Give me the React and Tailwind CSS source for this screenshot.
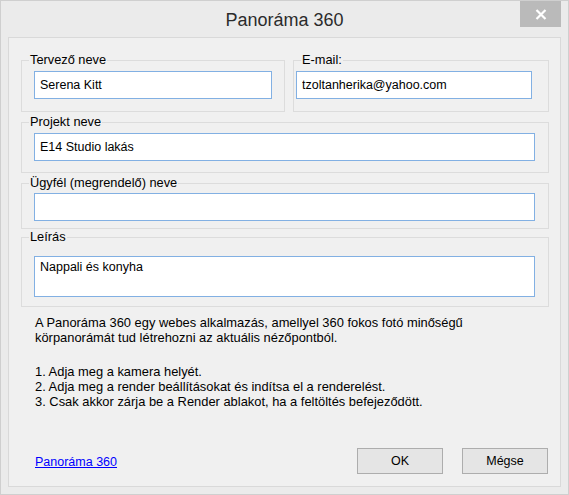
import React from "react";

const Group = ({ label, className = "", children, inner = "" }) => (
    <fieldset className={`border border-[#dcdcdc] ${className}`}>
        <legend className="ml-[7px] px-[1px] leading-[14px] text-[12.8px] text-black">{label}</legend>
        <div className={inner}>{children}</div>
    </fieldset>
);

const Field = ({ value = "", className = "" }) => (
    <input
        readOnly
        value={value}
        className={`block w-full h-[28px] border border-[#82b0e3] bg-white px-[5px] text-[12.5px] text-black outline-none ${className}`}
    />
);

export default function App() {
    return (
        <div className="w-[569px] h-[495px] bg-[#ebebeb] border border-[#cfcfcf] relative font-['Liberation_Sans',Arial,sans-serif] text-[12.5px] text-black flex flex-col">
            {/* title bar */}
            <div className="h-[36px] flex items-center justify-center pt-[3px]">
                <span className="text-[18px] text-[#2b2b2b]">Panoráma 360</span>
            </div>
            <button className="absolute top-0 right-[7px] w-[41px] h-[26px] bg-[#bababa] flex items-center justify-center" aria-label="Close">
                <svg width="12" height="11" viewBox="0 0 12 11">
                    <path d="M1.5 1 L10.5 10 M10.5 1 L1.5 10" stroke="#fff" strokeWidth="2.2" />
                </svg>
            </button>

            {/* client area */}
            <div className="mx-[7px] h-[450px] bg-[#f0f0f0] border border-[#d9d9d9] flex flex-col pl-[12px] pr-[11px] pt-[15px]">
                <div className="flex gap-[8px]">
                    <Group label="Tervező neve" className="w-[264px]" inner="pt-[4px] pb-[12px] pl-[12px] pr-[12px]">
                        <Field value="Serena Kitt" />
                    </Group>
                    <Group label="E-mail:" className="w-[256px]" inner="pt-[4px] pb-[12px] pl-[2px] pr-[16px]">
                        <Field value="tzoltanherika@yahoo.com" />
                    </Group>
                </div>
                <Group label="Projekt neve" className="mt-[3px]" inner="pt-[4px] pb-[11px] pl-[12px] pr-[13px]">
                    <Field value="E14 Studio lakás" />
                </Group>
                <Group label="Ügyfél (megrendelő) neve" className="mt-[3px]" inner="pt-[3px] pb-[7px] pl-[12px] pr-[13px]">
                    <Field />
                </Group>
                <Group label="Leírás" className="mt-[1px]" inner="pt-[12px] pb-[9px] pl-[12px] pr-[13px]">
                    <textarea
                        readOnly
                        value="Nappali és konyha"
                        className="block w-full h-[41px] resize-none border border-[#82b0e3] bg-white px-[5px] pt-[3px] leading-[15px] text-[12.5px] text-black outline-none overflow-hidden"
                    />
                </Group>

                <div className="pl-[14px] leading-[15px] text-[12.9px]">
                    <p className="mt-[8px]">
                        A Panoráma 360 egy webes alkalmazás, amellyel 360 fokos fotó minőségű
                        <br />
                        körpanorámát tud létrehozni az aktuális nézőpontból.
                    </p>
                    <p className="mt-[19px]">
                        1. Adja meg a kamera helyét.
                        <br />
                        2. Adja meg a render beállításokat és indítsa el a renderelést.
                        <br />
                        3. Csak akkor zárja be a Render ablakot, ha a feltöltés befejeződött.
                    </p>
                </div>

                <div className="mt-auto mb-[12px] flex items-center pl-[14px] pr-[1px]">
                    <a href="#" className="text-[#0000ff] underline pt-[2px]">Panoráma 360</a>
                    <div className="ml-auto flex gap-[19px]">
                        <button className="w-[86px] h-[26px] border border-[#adadad] bg-[#e5e5e5] text-black">OK</button>
                        <button className="w-[86px] h-[26px] border border-[#adadad] bg-[#e5e5e5] text-black">Mégse</button>
                    </div>
                </div>
            </div>
        </div>
    );
}
